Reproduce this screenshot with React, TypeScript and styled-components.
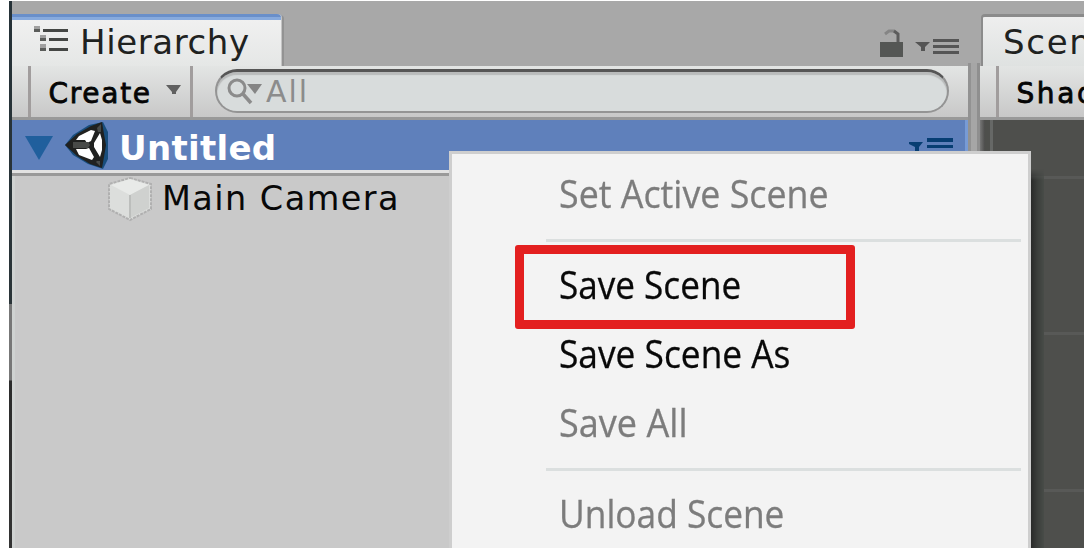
import React from "react";
import styled, { createGlobalStyle, css } from "styled-components";

const Global = createGlobalStyle`
  * { box-sizing: border-box; }
  body { margin: 0; background: #fff; overflow: hidden; font-family: "DejaVu Sans", sans-serif; }
  svg { display: block; flex: none; }
`;

const Page = styled.main`
  width: 1090px;
  height: 555px;
  padding: 1px 6px 7px 9px;
  position: relative;
`;
const Editor = styled.div`
  display: flex;
  width: 1075px;
  height: 547px;
  overflow: hidden;
  background: #a8a8a8;
`;
const Edge = styled.div`
  width: 3px;
  flex: none;
  background: linear-gradient(#263238 0, #2a3438 303px, #777 303px, #777 379px, #2b2b2b 380px, #333 100%);
`;
const Panel = styled.section<{ $width: number }>`
  width: ${(p) => p.$width}px;
  flex: none;
  display: flex;
  flex-direction: column;
  overflow: hidden;
`;
const Divider = styled.div`
  width: 12px;
  flex: none;
  padding-top: 62px;
  display: flex;
  &::before {
    content: "";
    flex: 1;
    background: #a6a6a6;
    border-left: 3px solid #929292;
    border-right: 3px solid #8f8f8f;
  }
`;
const TabBar = styled.header`
  height: 65px;
  flex: none;
  padding-top: 13px;
  display: flex;
  justify-content: space-between;
`;
const Tab = styled.div<{ $active?: boolean }>`
  display: flex;
  height: 52px;
  ${(p) =>
    p.$active
      ? css`
          width: 270px;
          padding: 6px 0 0 21px;
          background: linear-gradient(#698fca 3px, #87aadd 3px, #87aadd 6px, #f0f0f0 6px, #e5e7e6);
          border-top-right-radius: 4px;
          box-shadow: inset -1px 0 #c4c4c4, 2px 1px #939393;
        `
      : css`
          width: 104px;
          margin-left: 1px;
          padding-left: 21px;
          background: linear-gradient(#eeeeee, #dfe2e1);
          border-top: 3px solid #8b8b8b;
          border-left: 2px solid #8b8b8b;
          border-top-left-radius: 4px;
        `}
`;
const TabLabel = styled.span<{ $top: number; $left?: number; $spacing: number }>`
  margin: ${(p) => p.$top}px 0 0 ${(p) => p.$left ?? 0}px;
  font-size: 34px;
  line-height: 40px;
  letter-spacing: ${(p) => p.$spacing}px;
  color: #20221f;
  white-space: nowrap;
`;
const TabTools = styled.div`
  display: flex;
  padding: 15px 8px 0 0;
`;
const Toolbar = styled.div`
  height: 54px;
  flex: none;
  display: flex;
  background: linear-gradient(#e3e5e4, #c8c8c8);
  border-bottom: 3px solid #999;
`;
const Rule = styled.i<{ $left: number }>`
  width: 3px;
  flex: none;
  margin-left: ${(p) => p.$left}px;
  background: #a19d9d;
`;
const ToolButton = styled.div<{ $width: number; $spacing: number }>`
  width: ${(p) => p.$width}px;
  flex: none;
  display: flex;
  padding-left: 17.5px;
  font-size: 28px;
  line-height: 56px;
  letter-spacing: ${(p) => p.$spacing}px;
  color: #050505;
  -webkit-text-stroke: 0.8px #050505;
  white-space: nowrap;
`;
const Caret = styled.svg`
  margin-left: 14px;
`;
const Search = styled.div`
  width: 734px;
  height: 44px;
  margin: 3px 0 0 22px;
  padding-left: 9px;
  display: flex;
  background: #d8dcdc;
  border: 2px solid #949494;
  border-top: 3px solid #565656;
  border-radius: 22px;
  box-shadow: inset 0 3px 1px #b9bbbb;
`;
const SearchText = styled.span`
  margin-left: 2px;
  font-size: 30px;
  line-height: 39px;
  letter-spacing: 2px;
  color: #8c8c8c;
`;
const Tree = styled.div`
  flex: 1;
  background: #c9c9c9;
  border-left: 3px solid #cfd2d1;
`;
const SceneRow = styled.div`
  height: 56px;
  margin-left: -3px;
  display: flex;
  background: #5f80bb;
  border-bottom: 3px solid #999;
  box-shadow: inset 0 -3px #e2e2e2, inset -3px 0 #789bd5;
`;
const SceneName = styled.strong`
  margin-left: 10px;
  font-size: 34px;
  line-height: 56px;
  letter-spacing: 0.3px;
  color: #fff;
`;
const RowMenu = styled.div`
  margin: 16px 15px 0 auto;
`;
const ObjectRow = styled.div`
  height: 48px;
  display: flex;
  padding-left: 93px;
`;
const ObjectName = styled.span`
  margin-left: 9px;
  font-size: 33.5px;
  line-height: 46px;
  letter-spacing: 1.45px;
  color: #080808;
`;
const Viewport = styled.div`
  flex: 1;
  background:
    linear-gradient(90deg, #777 0, #4b4b4a 5px, transparent 5px, transparent 10px, #666866 10px, #666866 13px, transparent 13px),
    linear-gradient(transparent 56px, #585957 56px, #585957 59px, transparent 59px, transparent 212px, #585957 212px, #585957 215px, transparent 215px, transparent 369px, #585957 369px, #585957 372px, transparent 372px),
    #4e4f4c;
`;
const MenuClip = styled.div`
  position: absolute;
  left: 449px;
  top: 151px;
  width: 635px;
  height: 397px;
  overflow: hidden;
`;
const Shade = styled.div`
  position: absolute;
  left: 582px;
  top: 18px;
  bottom: 0;
  width: 13px;
  background: linear-gradient(90deg, #292a29, #3b3e3b 50%, #484c48);
  mask-image: linear-gradient(transparent, #000 12px);
`;
const Menu = styled.div`
  position: relative;
  width: 582px;
  height: 405px;
  padding: 6px 7px 0 94px;
  background: #f3f3f3;
  border: 3px solid #cecece;
`;
const MenuItem = styled.div<{ $disabled?: boolean }>`
  height: 69px;
  padding-left: 13px;
  font-family: "Open Sans", sans-serif;
  font-size: 39px;
  line-height: 66px;
  color: ${(p) => (p.$disabled ? "#7c7c7c" : "#080808")};
  -webkit-text-stroke: 0.3px currentColor;
  white-space: nowrap;
`;
const MenuLabel = styled.span<{ $stretch: number }>`
  display: inline-block;
  transform: scaleX(${(p) => p.$stretch});
  transform-origin: left center;
`;
const Separator = styled.div`
  height: 22px;
  padding-top: 10px;
  &::before {
    content: "";
    display: block;
    height: 3px;
    background: #dbdfdf;
  }
`;
const Highlight = styled.div`
  position: absolute;
  left: 515px;
  top: 245px;
  width: 340px;
  height: 84px;
  border: 9px solid #e31f1f;
  border-radius: 3px;
`;
const IconSlot = styled.div<{ $top: number }>`
  padding-top: ${(p) => p.$top}px;
`;

const HierarchyIcon = () => (
  <svg width="35" height="27" viewBox="0 0 35 27" shapeRendering="crispEdges">
    <path fill="#a0a0a0" d="M1 0h6v3H1zM7 9h6v3H7zM7 18h6v4H7z" />
    <path fill="#5a5c5a" d="M1 3h6v3H1zM7 12h6v3H7zM7 22h6v3H7z" />
    <path fill="#444644" d="M10 3h25v3H10zM16 12h19v3H16zM16 22h19v3H16z" />
  </svg>
);
const LockIcon = () => (
  <svg width="80" height="30" viewBox="0 0 80 30">
    <path d="M5 5l4-3h6" fill="none" stroke="#858585" strokeWidth="3" />
    <path d="M14 2l4 3v9" fill="none" stroke="#5c5c5c" strokeWidth="3" />
    <path fill="#545654" d="M0 13h23v15H0z" />
    <path fill="#555" d="M35 13h15l-5 5v4h-4v-4zM53 10h26v3H53zM53 16h26v3H53zM53 22h26v3H53z" />
  </svg>
);
const SearchIcon = () => (
  <svg width="38" height="32" viewBox="0 0 38 32">
    <circle cx="11" cy="11" r="8" fill="none" stroke="#8b8b8b" strokeWidth="3" />
    <path d="m17 17 8 9" stroke="#8b8b8b" strokeWidth="3.5" />
    <path fill="#858585" d="M21 7h15l-7 10z" />
  </svg>
);
const UnityIcon = () => (
  <svg width="44" height="48" viewBox="0 0 44 48">
    <path fill="#184d7c" d="M0 24 8 14 24 4 38 1l5 10v27l-5 10-15-5L8 34z" />
    <path fill="#202120" d="M0 24 12 13 26 5l11-4 2 12 2 11-2 12-2 11-12-4-13-8z" />
    <path fill="#fff" d="m11 19 3-4 12-6 4 1-4 10-4 2-2-3zM11 28h10l3-1 5 9-2 3-13-5zM35 12l2 7v10l-2 7-6-10v-4z" />
    <path fill="#484a48" d="M8 21h15l2 3-2 3H8zM32 7l4-4v8h-3zM32 40h3v5l-4-4z" />
  </svg>
);
const CubeIcon = () => (
  <svg width="45" height="46" viewBox="0 0 45 46">
    <path fill="#dcdedc" stroke="#b0b0b0" strokeWidth="2" strokeDasharray="3 1" d="m22 2 21 6v25L22 44 1 33V8z" />
    <path fill="#e8eae8" d="M3 9 22 3l19 6-19 10z" />
    <path fill="#cfd1cf" d="m22 19 19-10v23L22 42z" />
    <path d="M22 19v23" stroke="#bcbebc" strokeWidth="2" />
  </svg>
);

export default function App() {
  return (
    <Page>
      <Global />
      <Editor>
        <Edge />
        <Panel $width={956}>
          <TabBar>
            <Tab $active>
              <IconSlot $top={6}><HierarchyIcon /></IconSlot>
              <TabLabel $top={2} $left={12} $spacing={0.6}>Hierarchy</TabLabel>
            </Tab>
            <TabTools><LockIcon /></TabTools>
          </TabBar>
          <Toolbar>
            <Rule $left={16} />
            <ToolButton $width={159} $spacing={1.7}>
              Create
              <Caret width="16" height="44" viewBox="0 0 16 44">
                <path fill="#606060" d="M0 19h15l-5 7v2H6v-2z" />
              </Caret>
            </ToolButton>
            <Rule $left={0} />
            <Search>
              <IconSlot $top={5}><SearchIcon /></IconSlot>
              <SearchText>All</SearchText>
            </Search>
          </Toolbar>
          <Tree>
            <SceneRow>
              <svg width="53" height="50" viewBox="0 0 53 50">
                <path fill="#205f9d" d="M13 16h28L27 40z" />
              </svg>
              <IconSlot $top={1}><UnityIcon /></IconSlot>
              <SceneName>Untitled</SceneName>
              <RowMenu>
                <svg width="45" height="24" viewBox="0 0 45 24">
                  <path fill="#073e73" d="M1 6h14l-4 5v5H7v-5L1 8zM19 2h26v4H19zM19 9h26v3H19z" />
                </svg>
              </RowMenu>
            </SceneRow>
            <ObjectRow>
              <CubeIcon />
              <ObjectName>Main Camera</ObjectName>
            </ObjectRow>
          </Tree>
        </Panel>
        <Divider />
        <Panel $width={104}>
          <TabBar>
            <Tab><TabLabel $top={5} $left={-1} $spacing={1.7}>Scene</TabLabel></Tab>
          </TabBar>
          <Toolbar>
            <Rule $left={16} />
            <ToolButton $width={100} $spacing={2.6}>Shaded</ToolButton>
          </Toolbar>
          <Viewport />
        </Panel>
      </Editor>
      <MenuClip>
        <Shade />
        <Menu>
          <MenuItem $disabled><MenuLabel $stretch={0.918}>Set Active Scene</MenuLabel></MenuItem>
          <Separator />
          <MenuItem><MenuLabel $stretch={0.9}>Save Scene</MenuLabel></MenuItem>
          <MenuItem><MenuLabel $stretch={0.905}>Save Scene As</MenuLabel></MenuItem>
          <MenuItem $disabled><MenuLabel $stretch={0.925}>Save All</MenuLabel></MenuItem>
          <Separator />
          <MenuItem $disabled><MenuLabel $stretch={0.905}>Unload Scene</MenuLabel></MenuItem>
        </Menu>
      </MenuClip>
      <Highlight />
    </Page>
  );
}
